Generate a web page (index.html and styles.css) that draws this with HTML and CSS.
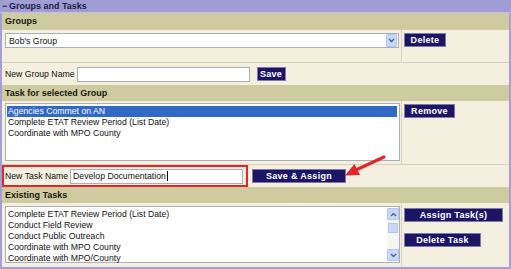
FILE: index.html
```html
<!DOCTYPE html>
<html lang="en">
<head>
    <meta charset="UTF-8">
    <title>Groups and Tasks</title>
    <link rel="stylesheet" href="styles.css">
</head>
<body>
    <div class="panel">
        <div class="title"><span class="toggle">&minus;</span>Groups and Tasks</div>

        <div class="section-head">Groups</div>
        <div class="split row-groups">
            <div class="cell-main">
                <div class="combo">
                    <span class="combo-text">Bob's Group</span>
                    <span class="combo-btn">
                        <svg width="7" height="5" viewBox="0 0 7 5"><path d="M1 1 L3.5 3.5 L6 1" fill="none" stroke="#4d6185" stroke-width="1.4"/></svg>
                    </span>
                </div>
            </div>
            <div class="cell-side">
                <button class="btn btn-delete">Delete</button>
            </div>
        </div>
        <div class="inline-row">
            <label class="field-label" for="groupName">New Group Name</label>
            <input class="text-input" type="text" id="groupName">
            <button class="btn btn-save">Save</button>
        </div>

        <div class="section-head">Task for selected Group</div>
        <div class="split row-tasks">
            <div class="cell-main">
                <div class="listbox list-tasks">
                    <div class="list-item selected">Agencies Commet on AN</div>
                    <div class="list-item">Complete ETAT Review Period (List Date)</div>
                    <div class="list-item">Coordinate with MPO County</div>
                </div>
            </div>
            <div class="cell-side">
                <button class="btn btn-remove">Remove</button>
            </div>
        </div>
        <div class="inline-row new-task-row">
            <div class="callout">
                <label class="field-label">New Task Name</label>
                <div class="text-input task-input">Develop Documentation<span class="caret"></span></div>
            </div>
            <button class="btn btn-save-assign">Save &amp; Assign</button>
        </div>

        <div class="section-head">Existing Tasks</div>
        <div class="split row-existing">
            <div class="cell-main">
                <div class="listbox list-existing">
                    <div class="list-items">
                        <div class="list-item">Complete ETAT Review Period (List Date)</div>
                        <div class="list-item">Conduct Field Review</div>
                        <div class="list-item">Conduct Public Outreach</div>
                        <div class="list-item">Coordinate with MPO County</div>
                        <div class="list-item">Coordinate with MPO/County</div>
                    </div>
                    <div class="scrollbar">
                        <span class="scroll-btn">
                            <svg width="7" height="5" viewBox="0 0 7 5"><path d="M1 4 L3.5 1.5 L6 4" fill="none" stroke="#4d6185" stroke-width="1.4"/></svg>
                        </span>
                        <span class="scroll-track"><span class="scroll-thumb"></span></span>
                        <span class="scroll-btn">
                            <svg width="7" height="5" viewBox="0 0 7 5"><path d="M1 1 L3.5 3.5 L6 1" fill="none" stroke="#4d6185" stroke-width="1.4"/></svg>
                        </span>
                    </div>
                </div>
            </div>
            <div class="cell-side side-stack">
                <button class="btn btn-assign">Assign Task(s)</button>
                <button class="btn btn-delete-task">Delete Task</button>
            </div>
        </div>

        <!-- red callout arrow drawn over the form -->
        <svg class="callout-arrow" width="55" height="32" viewBox="0 0 55 32">
            <path d="M47 7 L20 19.5" stroke="#e3262b" stroke-width="3.2" stroke-linecap="round"/>
            <path d="M8 25.5 L23 25 L17.5 14 Z" fill="#e3262b"/>
        </svg>
    </div>
</body>
</html>
```

FILE: styles.css
```css
body {
    margin: 0;
    font-family: "Liberation Sans", Arial, sans-serif;
    font-size: 8.7px;
    color: #111;
    background-color: #fff;
}
.panel {
    position: relative;
    width: 511px;
    height: 269px;
    box-sizing: border-box;
    border: 2px solid #a4a0d4;
    border-top: 0;
    background-color: #f5efdf;
}
.title {
    height: 12px;
    margin: 0 -2px;
    padding-left: 2px;
    background-color: #a09cd4;
    border-bottom: 1px solid #c4c1e4;
    font-size: 9px;
    font-weight: bold;
    line-height: 12px;
    color: #1d1d4a;
}
.toggle {
    display: inline-block;
    width: 7px;
}
.section-head {
    height: 16px;
    padding-left: 3px;
    background-color: #cfcba1;
    font-size: 9px;
    font-weight: bold;
    line-height: 16px;
    color: #1a1a10;
}
.title + .section-head {
    height: 17px;
    line-height: 17px;
}
.split {
    display: flex;
}
.cell-main {
    width: 400px;
    box-sizing: border-box;
    padding: 3px 0 0 3px;
    border-right: 1px solid #d8d1bc;
}
.cell-side {
    flex: 1;
    padding: 3px 0 0 2px;
}
.row-groups {
    height: 32px;
    border-bottom: 1px solid #d8d1bc;
}
.row-tasks {
    height: 63px;
    border-bottom: 1px solid #d8d1bc;
}
.row-tasks .cell-main {
    padding-top: 2px;
}
.row-existing {
    height: 63px;
}
.side-stack {
    display: flex;
    flex-direction: column;
    align-items: flex-start;
    gap: 11px;
    padding-top: 5px;
}
.combo {
    display: flex;
    align-items: center;
    justify-content: space-between;
    width: 394px;
    height: 15px;
    box-sizing: border-box;
    padding: 0 1px 0 3px;
    background-color: #fff;
    border: 1px solid #a7afb8;
}
.combo-btn, .scroll-btn {
    display: flex;
    align-items: center;
    justify-content: center;
    width: 11px;
    height: 12px;
    box-sizing: border-box;
    background-color: #c8d8fa;
    border: 1px solid #b3c6ee;
    border-radius: 1px;
}
.combo-btn {
    height: 13px;
}
.inline-row {
    display: flex;
    align-items: center;
    height: 22px;
    padding-left: 3px;
}
.field-label {
    margin-right: 2px;
}
.text-input {
    width: 173px;
    height: 15px;
    box-sizing: border-box;
    margin: 0;
    padding: 0 2px;
    border: 1px solid #a7afb8;
    background-color: #fff;
    font-family: inherit;
    font-size: 8.7px;
}
.new-task-row {
    padding-left: 0;
}
.callout {
    display: flex;
    align-items: center;
    width: 246px;
    height: 22px;
    box-sizing: border-box;
    padding-left: 1px;
    border: 2px solid #e1262c;
}
.task-input {
    display: flex;
    align-items: center;
    line-height: 13px;
}
.caret {
    display: inline-block;
    width: 1px;
    height: 10px;
    margin-left: 1px;
    background-color: #000;
}
.btn {
    height: 14px;
    box-sizing: border-box;
    padding: 0;
    background-color: #1c1566;
    border: 1px solid #7d7aa8;
    color: #fff;
    font-family: inherit;
    font-size: 9px;
    font-weight: bold;
    letter-spacing: 0.3px;
    line-height: 12px;
    cursor: pointer;
}
.btn-delete { width: 42px; }
.btn-save { width: 29px; margin-left: 7px; }
.btn-remove { width: 51px; }
.btn-save-assign { width: 94px; margin-left: 4px; }
.btn-assign { width: 99px; }
.btn-delete-task { width: 77px; }
.listbox {
    width: 395px;
    box-sizing: border-box;
    background-color: #fff;
    border: 1px solid #a7afb8;
}
.list-tasks {
    height: 58px;
    padding: 2px 2px 0 1px;
}
.list-existing {
    display: flex;
    height: 57px;
    padding: 1px 0 0 1px;
}
.list-items {
    flex: 1;
    padding-top: 1px;
}
.list-item {
    height: 11px;
    padding-left: 1px;
    line-height: 11px;
    white-space: nowrap;
}
.list-item.selected {
    background-color: #3169c6;
    color: #fff;
}
.scrollbar {
    display: flex;
    flex-direction: column;
    width: 12px;
    margin: 0 0 1px 0;
    background-color: #f6f5f0;
}
.scroll-btn {
    width: 12px;
}
.scroll-track {
    flex: 1;
    padding-top: 3px;
}
.scroll-thumb {
    display: block;
    height: 8px;
    margin: 0 1px;
    background-color: #c8d8fa;
    border: 1px solid #b3c6ee;
}
.callout-arrow {
    position: absolute;
    left: 335px;
    top: 150px;
}
```
